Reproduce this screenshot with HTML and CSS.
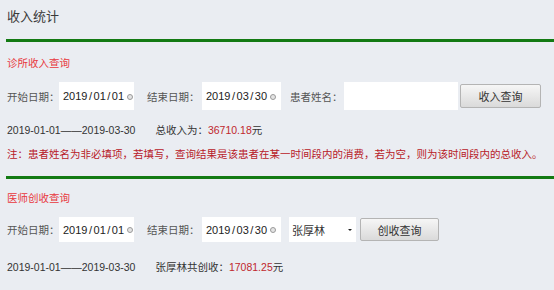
FILE: index.html
```html
<!DOCTYPE html>
<html lang="zh">
<head>
<meta charset="utf-8">
<link rel="stylesheet" href="styles.css">
</head>
<body>
<div class="page">
  <div class="title">收入统计</div>
  <div class="rule"></div>

  <div class="heading">诊所收入查询</div>
  <div class="row row-a">
    <span class="label">开始日期：</span>
    <div class="date"><span class="dv">2019<b>/</b>01<b>/</b>01</span><i class="clear"></i></div>
    <span class="label label-gap">结束日期：</span>
    <div class="date date-b"><span class="dv">2019<b>/</b>03<b>/</b>30</span><i class="clear"></i></div>
    <span class="label label-gap2">患者姓名：</span>
    <div class="text-input"></div>
    <button class="btn btn-a">收入查询</button>
  </div>
  <div class="result">2019-01-01——2019-03-30<span class="sp"></span>总收入为：<span class="num">36710.18</span>元</div>
  <div class="note">注：患者姓名为非必填项，若填写，查询结果是该患者在某一时间段内的消费，若为空，则为该时间段内的总收入。</div>
  <div class="rule rule-2"></div>

  <div class="heading">医师创收查询</div>
  <div class="row row-b">
    <span class="label">开始日期：</span>
    <div class="date"><span class="dv">2019<b>/</b>01<b>/</b>01</span><i class="clear"></i></div>
    <span class="label label-gap">结束日期：</span>
    <div class="date date-b"><span class="dv">2019<b>/</b>03<b>/</b>30</span><i class="clear"></i></div>
    <div class="select"><span>张厚林</span><i class="arrow"></i></div>
    <button class="btn btn-b">创收查询</button>
  </div>
  <div class="result result-2">2019-01-01——2019-03-30<span class="sp"></span>张厚林共创收：<span class="num">17081.25</span>元</div>
</div>
</body>
</html>
```
FILE: styles.css
```css
html, body {
  margin: 0;
  padding: 0;
  background: #eaedf2;
}
body {
  font-family: "Liberation Sans", "Noto Sans CJK SC", sans-serif;
  font-size: 10.5px;
  color: #333;
}
.page {
  padding-left: 6px;
  width: 548px;
}
.title {
  font-size: 13px;
  line-height: 34px;
  padding-left: 1px;
  color: #3a3a3a;
}
.rule {
  margin-top: 5px;
  height: 3px;
  background: #137a13;
}
.rule-2 {
  margin-top: 15px;
}
.heading {
  margin-top: 14px;
  padding-left: 1px;
  line-height: 14px;
  color: #e8383d;
}
.rule-2 + .heading {
  margin-top: 12px;
}
.row {
  display: flex;
  align-items: center;
  padding-left: 1px;
  margin-top: 12px;
  height: 28px;
}
.row-b {
  height: 25px;
}
.label {
  width: 52px;
  white-space: nowrap;
  color: #555;
}
.label-gap {
  margin-left: 13px;
  width: 55px;
}
.label-gap2 {
  margin-left: 9px;
  width: 54px;
}
.date {
  box-sizing: border-box;
  width: 75px;
  height: 100%;
  background: #fff;
  display: flex;
  align-items: center;
  padding-left: 4px;
  font-size: 11px;
  color: #222;
}
.date-b {
  width: 79px;
}
.dv b {
  font-weight: normal;
  margin: 0 1.5px;
}
.clear {
  display: block;
  box-sizing: border-box;
  width: 6px;
  height: 6px;
  border: 1.5px solid #9a9a9a;
  background: #e4e4e4;
  border-radius: 50%;
  margin-left: 3px;
  margin-top: 1px;
}
.text-input {
  width: 114px;
  height: 100%;
  background: #fff;
}
.btn {
  box-sizing: border-box;
  font-family: inherit;
  font-size: 11px;
  color: #333;
  border: 1px solid #b4b4b4;
  border-radius: 2px;
  background: linear-gradient(#f6f6f6, #dadada);
  padding: 0;
}
.btn-a {
  margin-left: 2px;
  width: 81px;
  height: 24px;
}
.btn-b {
  margin-left: 4px;
  width: 79px;
  height: 23px;
}
.select {
  box-sizing: border-box;
  margin-left: 8px;
  width: 67px;
  height: 100%;
  background: #fff;
  display: flex;
  align-items: center;
  padding-left: 3px;
  font-size: 11px;
  color: #333;
}
.select span {
  flex: 1;
}
.arrow {
  display: block;
  width: 0;
  height: 0;
  border-left: 2px solid transparent;
  border-right: 2px solid transparent;
  border-top: 2px solid #222;
  margin-right: 4px;
}
.result {
  margin-top: 13px;
  padding-left: 1px;
  line-height: 14px;
  color: #333;
}
.result-2 {
  margin-top: 18px;
}
.sp {
  display: inline-block;
  width: 20px;
}
.num {
  color: #c0272d;
}
.note {
  margin-top: 10px;
  padding-left: 1px;
  line-height: 14px;
  color: #b82028;
  white-space: nowrap;
}
```
